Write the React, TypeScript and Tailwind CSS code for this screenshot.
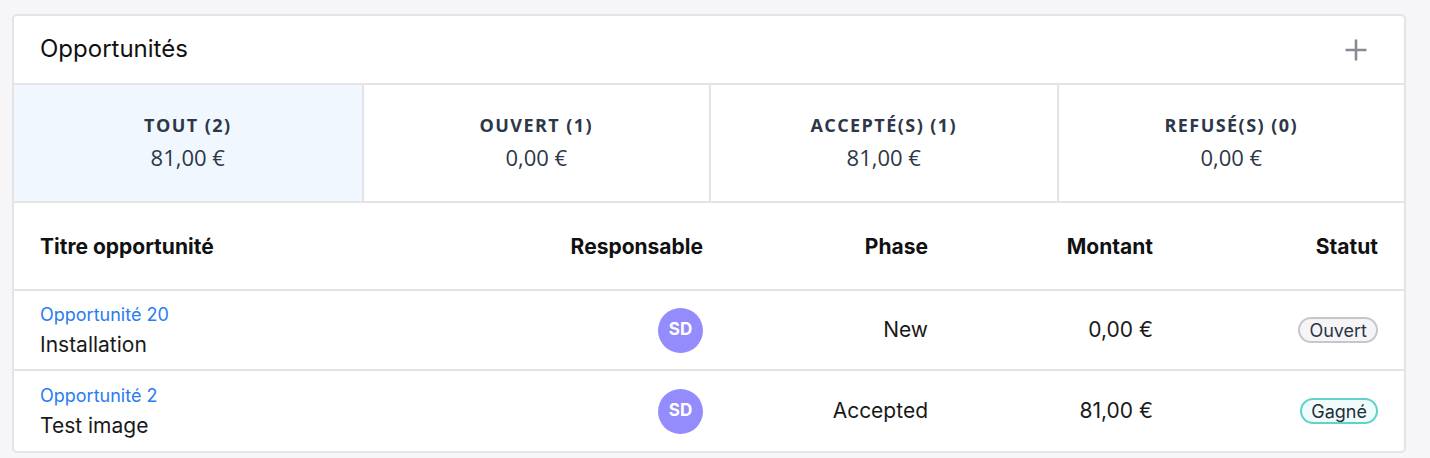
import React from "react";

type Tab = { label: string; amount: string; active?: boolean };
type Row = { ref: string; title: string; phase: string; amount: string; status: "open" | "won" };

const tabs: Tab[] = [
    { label: "TOUT (2)", amount: "81,00 €", active: true },
    { label: "OUVERT (1)", amount: "0,00 €" },
    { label: "ACCEPTÉ(S) (1)", amount: "81,00 €" },
    { label: "REFUSÉ(S) (0)", amount: "0,00 €" },
];

const rows: Row[] = [
    { ref: "Opportunité 20", title: "Installation", phase: "New", amount: "0,00 €", status: "open" },
    { ref: "Opportunité 2", title: "Test image", phase: "Accepted", amount: "81,00 €", status: "won" },
];

const StatusBadge = ({ status }: { status: Row["status"] }) =>
    status === "open" ? (
        <span className="inline-flex h-[26px] items-center rounded-full border-2 border-[#c6c6cb] bg-[#f5f5f7] px-[9px] text-[18px] text-[#2c3545]">Ouvert</span>
    ) : (
        <span className="inline-flex h-[26px] items-center rounded-full border-2 border-[#5dd3cb] bg-[#effcfb] px-[9px] text-[18px] text-[#1f2d3a]">Gagné</span>
    );

export default function App() {
    return (
        <div className="min-h-[458px] bg-[#f6f6f8] pl-[12px] pr-[24px] pt-[14px] pb-[6px] font-['Inter',sans-serif] text-[#1a1a1a]">
            <div className="overflow-hidden rounded-[5px] border-2 border-[#e4e4e7] bg-white">
                <div className="flex h-[69px] items-center justify-between border-b-2 border-[#e4e4e7] pl-[26px] pr-[36px]">
                    <h2 className="-mt-[2px] text-[24px] leading-none text-[#111]">Opportunités</h2>
                    <svg width="24" height="24" viewBox="0 0 24 24" className="text-[#8a8a92]">
                        <path d="M12 1.5v21M1.5 12h21" stroke="currentColor" strokeWidth="2.6" />
                    </svg>
                </div>

                <div className="grid grid-cols-4 border-b-2 border-[#e4e4e7] font-['Open_Sans',sans-serif] text-[#2d3748]">
                    {tabs.map((t, i) => (
                        <div
                            key={t.label}
                            className={`flex h-[116px] flex-col items-center justify-center gap-[8px] pb-[2px] ${i > 0 ? "border-l-2 border-[#e4e4e7]" : ""} ${t.active ? "bg-[#f0f7ff]" : ""}`}
                        >
                            <span className="text-[18px] font-bold leading-[22px] tracking-[0.08em]">{t.label}</span>
                            <span className="text-[22px] leading-[26px]">{t.amount}</span>
                        </div>
                    ))}
                </div>

                <div className="grid h-[88px] grid-cols-[1fr_225px_225px_225px_225px] items-center border-b-2 border-[#e4e4e7] px-[26px] pt-[2px] text-[21px] font-bold text-[#111]">
                    <span>Titre opportunité</span>
                    <span className="text-right">Responsable</span>
                    <span className="text-right">Phase</span>
                    <span className="text-right">Montant</span>
                    <span className="text-right">Statut</span>
                </div>

                {rows.map((r, i) => (
                    <div
                        key={r.ref}
                        className={`grid h-[80px] grid-cols-[1fr_225px_225px_225px_225px] items-center px-[26px] ${i < rows.length - 1 ? "border-b-2 border-[#e4e4e7]" : ""}`}
                    >
                        <div className="mt-[2px] flex flex-col gap-[8px]">
                            <span className="text-[18px] leading-[20px] text-[#2b7cf2]">{r.ref}</span>
                            <span className="text-[21px] leading-[24px] text-[#1a1a1a]">{r.title}</span>
                        </div>
                        <div className="flex justify-end">
                            <span className="flex h-[45px] w-[45px] items-center justify-center rounded-full bg-[#948cfc] text-[17px] font-bold text-white">SD</span>
                        </div>
                        <span className="text-right text-[21px]">{r.phase}</span>
                        <span className="text-right text-[21px]">{r.amount}</span>
                        <div className="flex justify-end">
                            <StatusBadge status={r.status} />
                        </div>
                    </div>
                ))}
            </div>
        </div>
    );
}
